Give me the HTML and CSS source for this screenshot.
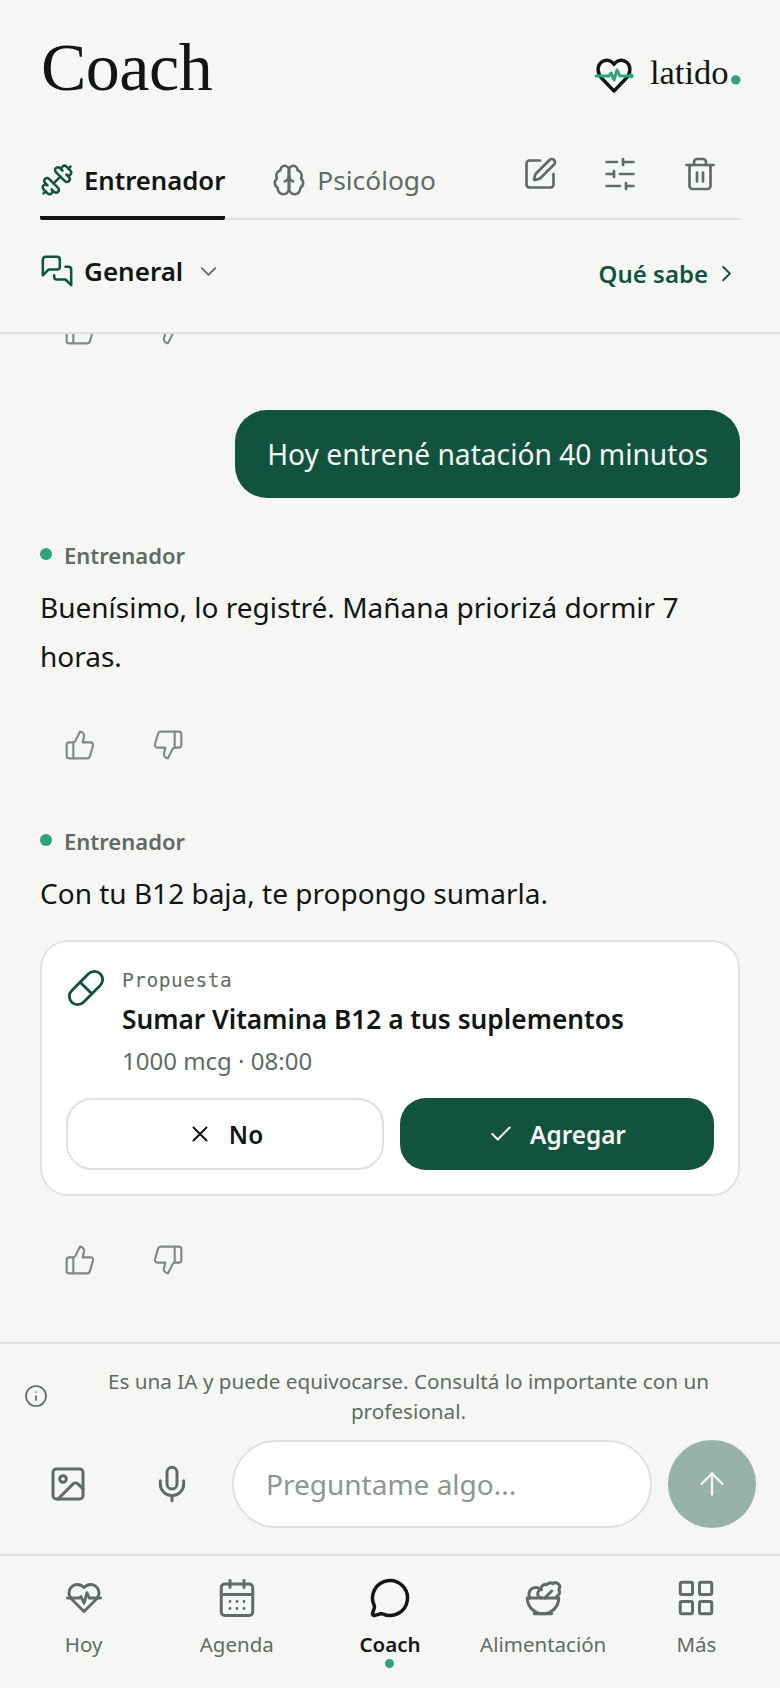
FILE: index.html
```html
<!DOCTYPE html>
<html lang="es">
<head>
<meta charset="utf-8">
<title>Coach</title>
<link rel="stylesheet" href="styles.css">
</head>
<body>
<div class="app">
  <header class="header">
    <div class="top">
      <h1 class="title">Coach</h1>
      <div class="logo">
        <svg class="logo-mark" viewBox="0 0 40 36" fill="none" stroke-linecap="round" stroke-linejoin="round"><path class="logo-heart" d="M20 34 8 21.5C3 16.500 3 9 7 5.500c4-3.500 10-3 13 2 3-5 9-5.500 13-2 4 3.500 4 11-1 16Z"/><path class="logo-pulse" d="M2 19h13l2-3 3 7 3-10 3 6h12"/><circle class="logo-end" cx="37" cy="19" r="2.400"/></svg>
        <span class="logo-text">latido<span class="logo-dot">.</span></span>
      </div>
    </div>
    <div class="tabs">
      <div class="tab tab-active">
        <svg class="ic ic-tab ic-green" viewBox="0 0 24 24"><g transform="matrix(-1 0 0 1 24 0)"><path d="M14.4 14.4 9.6 9.6"/><path d="M18.657 21.485a2 2 0 1 1-2.829-2.828l-1.767 1.768a2 2 0 1 1-2.829-2.829l6.364-6.364a2 2 0 1 1 2.829 2.829l-1.768 1.767a2 2 0 1 1 2.828 2.829z"/><path d="m21.5 21.5-1.4-1.4"/><path d="M3.9 3.9 2.5 2.5"/><path d="M6.404 12.768a2 2 0 1 1-2.829-2.829l1.768-1.767a2 2 0 1 1-2.828-2.829l2.828-2.828a2 2 0 1 1 2.829 2.828l1.767-1.768a2 2 0 1 1 2.829 2.829z"/></g></svg>
        <span>Entrenador</span>
      </div>
      <div class="tab">
        <svg class="ic ic-tab ic-grey" viewBox="0 0 24 24"><path d="M12 5a3 3 0 1 0-5.997.125 4 4 0 0 0-2.526 5.77 4 4 0 0 0 .556 6.588A4 4 0 1 0 12 18Z"/><path d="M12 5a3 3 0 1 1 5.997.125 4 4 0 0 1 2.526 5.77 4 4 0 0 1-.556 6.588A4 4 0 1 1 12 18Z"/><path d="M15 13a4.500 4.500 0 0 1-3-4 4.500 4.500 0 0 1-3 4"/><path d="M12 5v13"/></svg>
        <span>Psicólogo</span>
      </div>
      <div class="tab-actions">
        <svg class="ic ic-act ic-grey" viewBox="0 0 24 24"><path d="M12 3H5a2 2 0 0 0-2 2v14a2 2 0 0 0 2 2h14a2 2 0 0 0 2-2v-7"/><path d="M18.375 2.625a1 1 0 0 1 3 3l-9.013 9.014a2 2 0 0 1-.853.505l-2.873.84a.5.500 0 0 1-.62-.62l.84-2.873a2 2 0 0 1 .506-.852z"/></svg>
        <svg class="ic ic-act ic-grey" viewBox="0 0 24 24"><path d="M21 4h-7M10 4H3M21 12h-9M8 12H3M21 20h-5M12 20H3M14 2v4M8 10v4M16 18v4"/></svg>
        <svg class="ic ic-act ic-grey" viewBox="0 0 24 24"><path d="M3 6h18"/><path d="M19 6v14c0 1-1 2-2 2H7c-1 0-2-1-2-2V6"/><path d="M8 6V4c0-1 1-2 2-2h4c1 0 2 1 2 2v2"/><path d="M10 11v6M14 11v6"/></svg>
      </div>
    </div>
    <div class="subbar">
      <div class="thread">
        <svg class="ic ic-tab ic-green" viewBox="0 0 24 24"><path d="M14 9a2 2 0 0 1-2 2H6l-4 4V4a2 2 0 0 1 2-2h8a2 2 0 0 1 2 2z"/><path d="M18 9h2a2 2 0 0 1 2 2v11l-4-4h-6a2 2 0 0 1-2-2v-1"/></svg>
        <span>General</span>
        <svg class="ic ic-chev ic-grey" viewBox="0 0 24 24"><path d="m6 9 6 6 6-6"/></svg>
      </div>
      <div class="knows">
        <span>Qué sabe</span>
        <svg class="ic ic-chev ic-green" viewBox="0 0 24 24"><path d="m9 18 6-6-6-6"/></svg>
      </div>
    </div>
  </header>

  <main class="messages">
    <div class="rating">
      <svg class="ic ic-thumb" viewBox="0 0 24 24"><path d="M7 10v12"/><path d="M15 5.88 14 10h5.83a2 2 0 0 1 1.92 2.56l-2.33 8A2 2 0 0 1 17.5 22H4a2 2 0 0 1-2-2v-8a2 2 0 0 1 2-2h2.76a2 2 0 0 0 1.79-1.11L12 2a3.13 3.13 0 0 1 3 3.88Z"/></svg>
      <svg class="ic ic-thumb" viewBox="0 0 24 24"><path d="M17 14V2"/><path d="M9 18.12 10 14H4.17a2 2 0 0 1-1.92-2.56l2.33-8A2 2 0 0 1 6.5 2H20a2 2 0 0 1 2 2v8a2 2 0 0 1-2 2h-2.76a2 2 0 0 0-1.79 1.11L12 22a3.13 3.13 0 0 1-3-3.88Z"/></svg>
    </div>

    <div class="bubble">Hoy entrené natación 40 minutos</div>

    <div class="who who-first"><span class="who-dot"></span><span>Entrenador</span></div>
    <p class="reply">Buenísimo, lo registré. Mañana priorizá dormir 7 horas.</p>
    <div class="rating rating-mid">
      <svg class="ic ic-thumb" viewBox="0 0 24 24"><path d="M7 10v12"/><path d="M15 5.88 14 10h5.83a2 2 0 0 1 1.92 2.56l-2.33 8A2 2 0 0 1 17.5 22H4a2 2 0 0 1-2-2v-8a2 2 0 0 1 2-2h2.76a2 2 0 0 0 1.79-1.11L12 2a3.13 3.13 0 0 1 3 3.88Z"/></svg>
      <svg class="ic ic-thumb" viewBox="0 0 24 24"><path d="M17 14V2"/><path d="M9 18.12 10 14H4.17a2 2 0 0 1-1.92-2.56l2.33-8A2 2 0 0 1 6.5 2H20a2 2 0 0 1 2 2v8a2 2 0 0 1-2 2h-2.76a2 2 0 0 0-1.79 1.11L12 22a3.13 3.13 0 0 1-3-3.88Z"/></svg>
    </div>

    <div class="who who-second"><span class="who-dot"></span><span>Entrenador</span></div>
    <p class="reply">Con tu B12 baja, te propongo sumarla.</p>

    <section class="card">
      <div class="card-head">
        <svg class="ic ic-pill ic-green" viewBox="0 0 24 24"><path d="m10.5 20.5 10-10a4.95 4.95 0 1 0-7-7l-10 10a4.95 4.95 0 1 0 7 7Z"/><path d="m8.5 8.5 7 7"/></svg>
        <div class="card-body">
          <div class="card-kicker">Propuesta</div>
          <div class="card-title">Sumar Vitamina B12 a tus suplementos</div>
          <div class="card-sub">1000 mcg · 08:00</div>
        </div>
      </div>
      <div class="card-actions">
        <div class="btn btn-no">
          <svg class="ic ic-btn" viewBox="0 0 24 24"><path d="M18 6 6 18M6 6l12 12"/></svg>
          <span>No</span>
        </div>
        <div class="btn btn-yes">
          <svg class="ic ic-btn" viewBox="0 0 24 24"><path d="M20 6 9 17l-5-5"/></svg>
          <span>Agregar</span>
        </div>
      </div>
    </section>

    <div class="rating rating-last">
      <svg class="ic ic-thumb" viewBox="0 0 24 24"><path d="M7 10v12"/><path d="M15 5.88 14 10h5.83a2 2 0 0 1 1.92 2.56l-2.33 8A2 2 0 0 1 17.5 22H4a2 2 0 0 1-2-2v-8a2 2 0 0 1 2-2h2.76a2 2 0 0 0 1.79-1.11L12 2a3.13 3.13 0 0 1 3 3.88Z"/></svg>
      <svg class="ic ic-thumb" viewBox="0 0 24 24"><path d="M17 14V2"/><path d="M9 18.12 10 14H4.17a2 2 0 0 1-1.92-2.56l2.33-8A2 2 0 0 1 6.5 2H20a2 2 0 0 1 2 2v8a2 2 0 0 1-2 2h-2.76a2 2 0 0 0-1.79 1.11L12 22a3.13 3.13 0 0 1-3-3.88Z"/></svg>
    </div>
  </main>

  <section class="composer">
    <div class="notice">
      <svg class="ic ic-info ic-grey" viewBox="0 0 24 24"><circle cx="12" cy="12" r="10"/><path d="M12 16v-4M12 8h.01"/></svg>
      <p class="notice-text">Es una IA y puede equivocarse. Consultá lo importante con un profesional.</p>
    </div>
    <div class="input-row">
      <div class="tool">
        <svg class="ic ic-tool ic-grey" viewBox="0 0 24 24"><rect x="3" y="3" width="18" height="18" rx="2"/><circle cx="9" cy="9" r="2"/><path d="m21 15-3.086-3.086a2 2 0 0 0-2.828 0L6 21"/></svg>
      </div>
      <div class="tool">
        <svg class="ic ic-tool ic-grey" viewBox="0 0 24 24"><path d="M12 2a3 3 0 0 0-3 3v7a3 3 0 0 0 6 0V5a3 3 0 0 0-3-3Z"/><path d="M19 10v2a7 7 0 0 1-14 0v-2"/><path d="M12 19v3"/></svg>
      </div>
      <div class="input">Preguntame algo...</div>
      <div class="send">
        <svg class="ic ic-send" viewBox="0 0 24 24"><path d="m5 12 7-7 7 7"/><path d="M12 19V5"/></svg>
      </div>
    </div>
  </section>

  <nav class="nav">
    <div class="nav-item">
      <svg class="ic ic-nav ic-nav-heart" viewBox="0 0 24 24"><path d="M19 14c1.49-1.46 3-3.21 3-5.5A5.5 5.5 0 0 0 16.5 3c-1.76 0-3 .5-4.5 2-1.5-1.5-2.74-2-4.5-2A5.5 5.5 0 0 0 2 8.5c0 2.3 1.5 4.05 3 5.5l7 7Z"/><path d="M1 12h8.500l.5-1 2 4.500 2-7 1.500 3.500h7.500"/></svg>
      <span>Hoy</span>
    </div>
    <div class="nav-item">
      <svg class="ic ic-nav" viewBox="0 0 24 24"><path d="M8 2v4M16 2v4"/><rect x="3" y="4" width="18" height="18" rx="2"/><path d="M3 10h18"/><path class="ic-dots" d="M8 14h.01M12 14h.01M16 14h.01M8 18h.01M12 18h.01M16 18h.01"/></svg>
      <span>Agenda</span>
    </div>
    <div class="nav-item nav-active">
      <svg class="ic ic-nav" viewBox="0 0 24 24"><path d="M2.992 16.342a2 2 0 0 1 .094 1.167l-1.065 3.29a1 1 0 0 0 1.236 1.168l3.413-.998a2 2 0 0 1 1.099.092 10 10 0 1 0-4.777-4.719"/></svg>
      <span>Coach</span>
      <span class="nav-dot"></span>
    </div>
    <div class="nav-item">
      <svg class="ic ic-nav" viewBox="0 0 24 24"><path d="M7 21h10"/><path d="M12 21a9 9 0 0 0 9-9H3a9 9 0 0 0 9 9Z"/><path d="M11.38 12a2.4 2.4 0 0 1-.4-4.77 2.4 2.4 0 0 1 3.2-2.77 2.4 2.4 0 0 1 3.47-.63 2.4 2.4 0 0 1 3.37 3.37 2.4 2.4 0 0 1-1.1 3.7 2.51 2.51 0 0 1 .03 1.1"/><path d="m13 12 4-4"/><path d="M10.9 7.25A3.99 3.99 0 0 0 4 10c0 .73.2 1.41.54 2"/></svg>
      <span>Alimentación</span>
    </div>
    <div class="nav-item">
      <svg class="ic ic-nav" viewBox="0 0 24 24"><rect x="3" y="3" width="7" height="7" rx="1"/><rect x="14" y="3" width="7" height="7" rx="1"/><rect x="14" y="14" width="7" height="7" rx="1"/><rect x="3" y="14" width="7" height="7" rx="1"/></svg>
      <span>Más</span>
    </div>
  </nav>
</div>
</body>
</html>
```
FILE: styles.css
```css
* { box-sizing: border-box; }
html, body { margin: 0; padding: 0; }
body {
  background: #f6f7f5;
  color: #111614;
  font-family: "Noto Sans", "Open Sans", sans-serif;
}
.app {
  width: 780px;
  height: 1688px;
  display: flex;
  flex-direction: column;
  overflow: hidden;
}

/* icons */
.ic {
  display: block;
  flex: none;
  fill: none;
  stroke: currentColor;
  stroke-width: 1.8;
  stroke-linecap: round;
  stroke-linejoin: round;
}
.ic-green { color: #11533f; }
.ic-grey { color: #5f6b66; }
.ic-tab { width: 34px; height: 34px; }
.ic-act { width: 36px; height: 36px; }
.ic-chev { width: 27px; height: 27px; stroke-width: 1.6; }
.ic-thumb { width: 32px; height: 32px; color: #7f8985; stroke-width: 1.6; }
.ic-pill { width: 40px; height: 40px; stroke-width: 1.7; }
.ic-btn { width: 26px; height: 26px; stroke-width: 1.9; }
.ic-info { width: 24px; height: 24px; stroke-width: 1.7; }
.ic-tool { width: 40px; height: 40px; }
.ic-send { width: 36px; height: 36px; stroke-width: 1.6; }
.ic-nav { width: 42px; height: 42px; stroke-width: 1.7; }
.ic-nav-heart { width: 36px; height: 36px; margin: 3px; stroke-width: 1.9; }
.ic-dots { stroke-width: 1.6; }

/* header */
.header {
  height: 334px;
  flex: none;
  border-bottom: 2px solid #dfe0dd;
  display: flex;
  flex-direction: column;
}
.top {
  height: 134px;
  flex: none;
  padding: 0 40px;
  display: flex;
  justify-content: space-between;
  align-items: center;
}
.title {
  margin: 0 0 0 1px;
  font-family: "Liberation Serif", serif;
  font-weight: 400;
  font-size: 68px;
  line-height: 1;
  letter-spacing: -0.5px;
}
.logo {
  display: flex;
  align-items: center;
  gap: 16px;
  padding-top: 10px;
}
.logo-mark { width: 40px; height: 36px; display: block; margin-top: 6px; }
.logo-heart { stroke: #111614; stroke-width: 3.4; }
.logo-pulse { stroke: #2fa37a; stroke-width: 3; }
.logo-end { fill: #2fa37a; }
.logo-text {
  font-family: "Liberation Serif", serif;
  font-size: 34.5px;
  line-height: 1;
}
.logo-dot {
  color: #2fa37a;
  font-weight: 700;
  font-size: 58px;
  line-height: 0;
  margin-right: -3px;
}

.tabs {
  height: 86px;
  flex: none;
  margin: 0 40px;
  border-bottom: 2px solid #dfe0dd;
  display: flex;
  align-items: flex-start;
}
.tab {
  height: 86px;
  display: flex;
  align-items: center;
  gap: 11px;
  font-size: 26.3px;
  color: #5f6b66;
  padding-top: 6px;
  margin-left: 47px;
}
.tab-active {
  margin-left: 0;
  gap: 10px;
  font-size: 25.7px;
  color: #111614;
  font-weight: 600;
  border-bottom: 4px solid #111614;
  border-radius: 0 0 2px 2px;
  padding-top: 10px;
}
.tab-actions {
  margin-left: auto;
  margin-right: 22px;
  display: flex;
  gap: 44px;
  padding-top: 22px;
}

.subbar {
  flex: 1;
  padding: 0 40px 10px;
  display: flex;
  justify-content: space-between;
  align-items: center;
}
.thread {
  display: flex;
  align-items: center;
  gap: 10px;
  font-size: 26px;
  font-weight: 600;
}
.thread .ic-chev { margin-left: 2px; }
.knows {
  display: flex;
  align-items: center;
  gap: 5px;
  font-size: 24px;
  font-weight: 600;
  color: #11533f;
  padding-top: 4px;
}

/* messages */
.messages {
  flex: 1;
  min-height: 0;
  overflow: hidden;
  padding: 0 40px 54px;
  display: flex;
  flex-direction: column;
  justify-content: flex-end;
}
.rating {
  flex: none;
  height: 56px;
  display: flex;
  align-items: center;
  gap: 56px;
  padding-left: 24px;
}
.rating-mid { margin-top: 35px; }
.rating-last { margin-top: 36px; }
.bubble {
  flex: none;
  align-self: flex-end;
  margin-top: 52px;
  padding: 20px 32px 19px;
  background: #11533f;
  color: #f6f7f5;
  font-size: 28.2px;
  line-height: 49px;
  border-radius: 32px 32px 8px 32px;
}
.who {
  flex: none;
  height: 30px;
  display: flex;
  align-items: center;
  gap: 12px;
  padding-bottom: 2px;
  font-size: 22px;
  font-weight: 600;
  color: #5f6b66;
}
.who-first { margin-top: 43px; }
.who-second { margin-top: 54px; }
.who-dot {
  width: 12px;
  height: 12px;
  border-radius: 50%;
  background: #2fa37a;
  margin-bottom: 1px;
}
.reply {
  flex: none;
  margin: 12px 0 0;
  font-size: 28px;
  line-height: 49.5px;
}

.card {
  flex: none;
  margin-top: 22px;
  padding: 26px 24px 24px;
  height: 256px;
  background: #fff;
  border: 2px solid #e2e3e0;
  border-radius: 28px;
  display: flex;
  flex-direction: column;
}
.card-head {
  display: flex;
  gap: 16px;
}
.card-body { display: flex; flex-direction: column; }
.card-kicker {
  font-family: "DejaVu Sans Mono", "Liberation Mono", monospace;
  font-size: 19.5px;
  letter-spacing: 0.5px;
  line-height: 26px;
  color: #5f6b66;
}
.card-title {
  font-size: 26.3px;
  font-weight: 600;
  line-height: 38px;
  margin-top: 6px;
}
.card-sub {
  font-size: 24px;
  line-height: 38px;
  color: #5f6b66;
  margin-top: 4px;
}
.card-actions {
  margin-top: auto;
  display: flex;
  gap: 16px;
}
.btn {
  flex: 1;
  height: 72px;
  border-radius: 26px;
  display: flex;
  align-items: center;
  justify-content: center;
  gap: 16px;
  font-size: 24.3px;
  font-weight: 600;
}
.btn-no { background: #fff; border: 2px solid #e0e1de; }
.btn-yes { background: #11533f; color: #f6f7f5; }

/* composer */
.composer {
  flex: none;
  border-top: 2px solid #dfe0dd;
  padding: 22px 24px 26px;
}
.notice {
  display: flex;
  align-items: center;
  gap: 13px;
}
.notice-text {
  flex: 1;
  margin: 0;
  text-align: center;
  font-size: 20.7px;
  line-height: 30px;
  color: #5f6b66;
}
.input-row {
  margin-top: 14px;
  display: flex;
  align-items: center;
  gap: 16px;
}
.tool {
  width: 88px;
  height: 88px;
  flex: none;
  display: flex;
  align-items: center;
  justify-content: center;
}
.input {
  flex: 1;
  height: 88px;
  background: #fff;
  border: 2px solid #e0e1de;
  border-radius: 44px;
  padding: 0 32px;
  display: flex;
  align-items: center;
  font-size: 28px;
  color: #8d9692;
}
.send {
  width: 88px;
  height: 88px;
  flex: none;
  border-radius: 50%;
  background: #97b3a8;
  color: #f6f7f5;
  display: flex;
  align-items: center;
  justify-content: center;
}

/* nav */
.nav {
  flex: none;
  height: 134px;
  border-top: 2px solid #dfe0dd;
  padding: 21px 7px 0;
  display: grid;
  grid-template-columns: repeat(5, 1fr);
  align-items: start;
}
.nav-item {
  display: flex;
  flex-direction: column;
  align-items: center;
  gap: 10px;
  font-size: 20.5px;
  line-height: 30px;
  color: #5f6b66;
}
.nav-active { color: #111614; font-weight: 600; }
.nav-active .ic-nav { stroke-width: 2; }
.nav-dot {
  width: 9px;
  height: 9px;
  border-radius: 50%;
  background: #2fa37a;
  margin-top: -10px;
}
```
